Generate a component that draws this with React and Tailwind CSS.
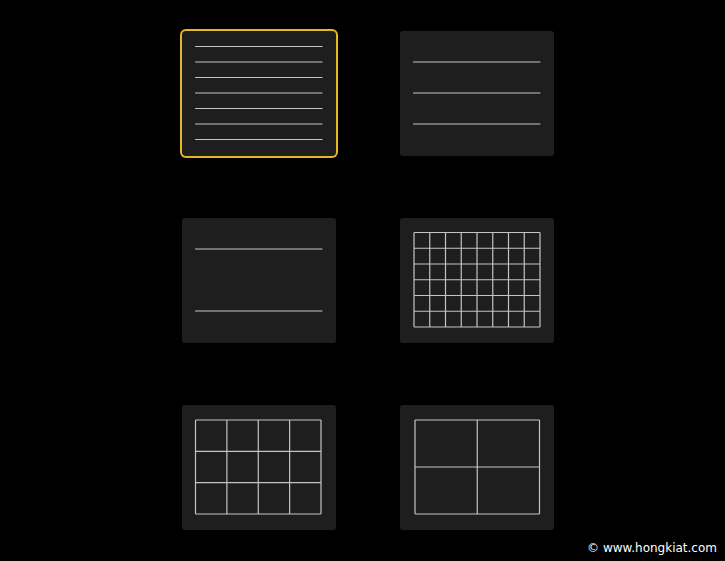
import React from "react";

const S = "#c4c4c4";

function Lines({ ys }) {
  return (
    <svg width="154" height="125" viewBox="0 0 154 125" className="block">
      {ys.map((y) => (
        <line key={y} x1="13.5" x2="140" y1={y} y2={y} stroke={S} strokeWidth="1.2" strokeLinecap="round" />
      ))}
    </svg>
  );
}

function Grid({ x0, x1, y0, y1, cols, rows }) {
  const els = [];
  for (let i = 0; i <= cols; i++) {
    const x = x0 + ((x1 - x0) * i) / cols;
    els.push(<line key={"c" + i} x1={x} x2={x} y1={y0} y2={y1} stroke={S} strokeWidth="1.2" />);
  }
  for (let j = 0; j <= rows; j++) {
    const y = y0 + ((y1 - y0) * j) / rows;
    els.push(<line key={"r" + j} x1={x0} x2={x1} y1={y} y2={y} stroke={S} strokeWidth="1.2" />);
  }
  return (
    <svg width="154" height="125" viewBox="0 0 154 125" className="block">
      {els}
    </svg>
  );
}

function Card({ children, selected }) {
  return (
    <div
      className={
        "w-[154px] h-[125px] rounded-[3px] bg-[#1e1e1e] " +
        (selected ? "shadow-[0_0_0_2px_#e5b52a] rounded-[4px]" : "")
      }
    >
      {children}
    </div>
  );
}

export default function App() {
  const row = (k) => 15.5 * k;
  return (
    <div className="relative w-[725px] h-[561px] bg-black overflow-hidden" style={{ fontFamily: '"DejaVu Sans", sans-serif' }}>
      <div className="grid grid-cols-[154px_154px] gap-x-[64px] gap-y-[62px] pl-[182px] pt-[31px]">
        <Card selected>
          <Lines ys={[1, 2, 3, 4, 5, 6, 7].map((k) => row(k))} />
        </Card>
        <Card>
          <Lines ys={[31, 62, 93]} />
        </Card>
        <Card>
          <Lines ys={[31, 93]} />
        </Card>
        <Card>
          <Grid x0={14} x1={140} y0={14.5} y1={109} cols={8} rows={6} />
        </Card>
        <Card>
          <Grid x0={13.5} x1={139} y0={15} y1={109} cols={4} rows={3} />
        </Card>
        <Card>
          <Grid x0={15} x1={139.5} y0={15} y1={109} cols={2} rows={2} />
        </Card>
      </div>
      <div className="absolute right-[8px] bottom-[6px] text-[12px] leading-[14px] text-white">
        © www.hongkiat.com
      </div>
    </div>
  );
}
